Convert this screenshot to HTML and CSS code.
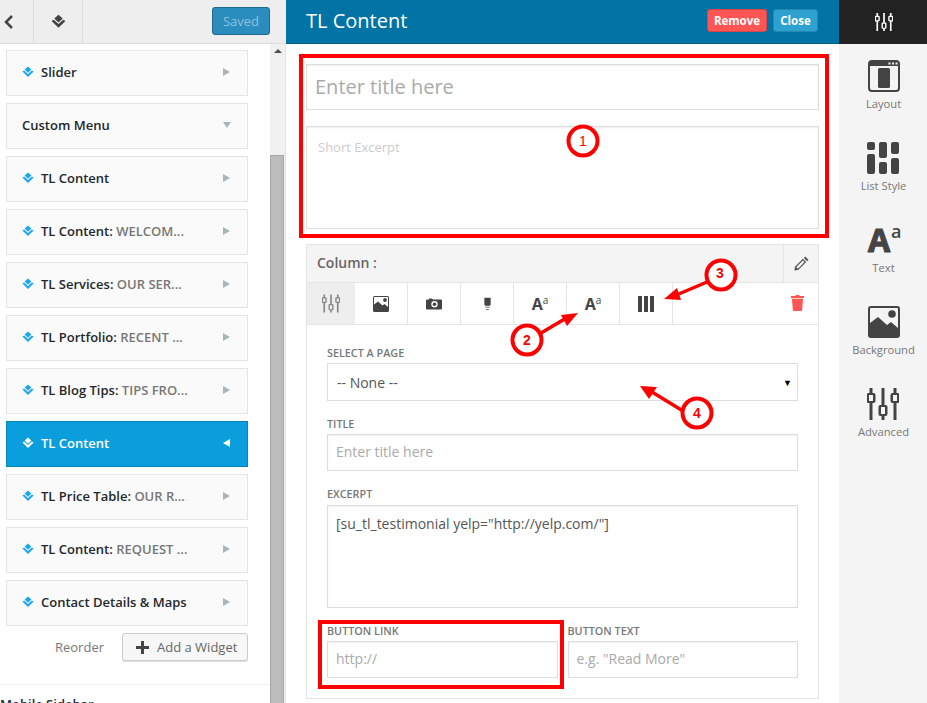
FILE: index.html
```html
<!DOCTYPE html>
<html lang="en">
<head>
    <meta charset="UTF-8">
    <title>TL Content</title>
    <link rel="stylesheet" href="styles.css">
</head>
<body>

<svg class="icon-defs" width="0" height="0">
    <symbol id="i-layers" viewBox="0 0 12 12">
        <path d="M6 .5 9.400 3.600 6 6.700 2.600 3.600z"/>
        <path d="M.4 5.600 2.200 4.500 6 8 9.800 4.500 11.600 5.600 6 11z"/>
    </symbol>
    <symbol id="i-sliders" viewBox="0 0 32 32">
        <path d="M2.500 0h3v5h1a2 2 0 0 1 2 2v6a2 2 0 0 1-2 2h-1v17h-3V15h-1a2 2 0 0 1-2-2V7a2 2 0 0 1 2-2h1zM2 7v6h4V7z" fill-rule="evenodd"/>
        <path d="M14.500 0h3v17h1a2 2 0 0 1 2 2v7a2 2 0 0 1-2 2h-1v4h-3v-4h-1a2 2 0 0 1-2-2v-7a2 2 0 0 1 2-2h1zM14 19v7h4v-7z" fill-rule="evenodd"/>
        <path d="M26.500 0h3v5h1a2 2 0 0 1 2 2v6a2 2 0 0 1-2 2h-1v17h-3V15h-1a2 2 0 0 1-2-2V7a2 2 0 0 1 2-2h1zM26 7v6h4V7z" fill-rule="evenodd"/>
    </symbol>
    <symbol id="i-image" viewBox="0 0 32 32">
        <path d="M3 0h26a3 3 0 0 1 3 3v26a3 3 0 0 1-3 3H3a3 3 0 0 1-3-3V3a3 3 0 0 1 3-3zM2 3v14l8-6 9 8 4-3 7 6V3a1 1 0 0 0-1-1H3a1 1 0 0 0-1 1z" fill-rule="evenodd"/>
        <circle cx="24" cy="8" r="3.800"/>
    </symbol>
    <symbol id="i-camera" viewBox="0 0 16 12">
        <path d="M1 1.500h2V.5h3l1 1h8a1 1 0 0 1 1 1v8a1 1 0 0 1-1 1H1a1 1 0 0 1-1-1v-8a1 1 0 0 1 1-1zM8.500 3a3.200 3.200 0 1 0 0 6.400 3.200 3.200 0 0 0 0-6.400z" fill-rule="evenodd"/>
        <circle cx="8.500" cy="6.200" r="1.800"/>
    </symbol>
    <symbol id="i-lamp" viewBox="0 0 10 14">
        <path d="M1.500 0h7v7.500l-1 1.500h-5l-1-1.500z"/>
        <path d="M2.500 10h5v1h-5zM3.500 12.500h3v1h-3z"/>
    </symbol>
    <symbol id="i-columns" viewBox="0 0 16 16">
        <path d="M0 0h4v16H0zM6 0h4v16H6zM12 0h4v16h-4z"/>
    </symbol>
    <symbol id="i-pencil" viewBox="0 0 16 16">
        <path d="M12 .5 15.500 4 14 5.500 10.500 2zM9.500 3 13 6.500 4.500 15 .5 15.500 1 11.500zM2.500 11.800l1.700 1.700 7-7L9.500 4.800z" fill-rule="evenodd"/>
    </symbol>
    <symbol id="i-trash" viewBox="0 0 14 17">
        <path d="M4.500 1 5.500 0h3l1 1H14v2H0V1zM1 4h12l-1 12a1 1 0 0 1-1 1H3a1 1 0 0 1-1-1z"/>
    </symbol>
    <symbol id="i-layout" viewBox="0 0 32 32">
        <path d="M4 0h24a4 4 0 0 1 4 4v24a4 4 0 0 1-4 4H4a4 4 0 0 1-4-4V4a4 4 0 0 1 4-4zM2 6v22a2 2 0 0 0 2 2h24a2 2 0 0 0 2-2V6z" fill-rule="evenodd"/>
        <rect x="10" y="8" width="12" height="20" rx="1.500"/>
        <path d="M20.500 2.500h2v2h-2zM24 2.500h2v2h-2zM27.500 2.500h2v2h-2z" fill="#f4f4f4"/>
    </symbol>
    <symbol id="i-list" viewBox="0 0 32 32">
        <rect x="0" y="0" width="8" height="8" rx="2"/>
        <rect x="12" y="0" width="8" height="16" rx="2"/>
        <rect x="24" y="0" width="8" height="12" rx="2"/>
        <rect x="0" y="12" width="8" height="20" rx="2"/>
        <rect x="12" y="20" width="8" height="12" rx="2"/>
        <rect x="24" y="16" width="8" height="16" rx="2"/>
    </symbol>
</svg>

<div class="app">
    <div class="left-panel">
        <div class="top-bar">
            <div class="top-cell back-cell">
                <svg class="back-icon" viewBox="0 0 10 14"><path d="M8 1 2 7l6 6" fill="none" stroke="#444" stroke-width="2.500"/></svg>
            </div>
            <div class="top-cell logo-cell">
                <svg class="logo-icon"><use href="#i-layers"/></svg>
            </div>
            <button class="saved-btn">Saved</button>
        </div>
        <div class="left-body">
            <div class="widget-list">
                <div class="widget"><svg class="layer"><use href="#i-layers"/></svg><span class="name">Slider</span><span class="arrow-right"></span></div>
                <div class="widget"><span class="name">Custom Menu</span><span class="arrow-down"></span></div>
                <div class="widget"><svg class="layer"><use href="#i-layers"/></svg><span class="name">TL Content</span><span class="arrow-right"></span></div>
                <div class="widget"><svg class="layer"><use href="#i-layers"/></svg><span class="name">TL Content: <em>WELCOM...</em></span><span class="arrow-right"></span></div>
                <div class="widget"><svg class="layer"><use href="#i-layers"/></svg><span class="name">TL Services: <em>OUR SER...</em></span><span class="arrow-right"></span></div>
                <div class="widget"><svg class="layer"><use href="#i-layers"/></svg><span class="name">TL Portfolio: <em>RECENT ...</em></span><span class="arrow-right"></span></div>
                <div class="widget"><svg class="layer"><use href="#i-layers"/></svg><span class="name">TL Blog Tips: <em>TIPS FRO...</em></span><span class="arrow-right"></span></div>
                <div class="widget active"><svg class="layer"><use href="#i-layers"/></svg><span class="name">TL Content</span><span class="arrow-left"></span></div>
                <div class="widget"><svg class="layer"><use href="#i-layers"/></svg><span class="name">TL Price Table: <em>OUR R...</em></span><span class="arrow-right"></span></div>
                <div class="widget"><svg class="layer"><use href="#i-layers"/></svg><span class="name">TL Content: <em>REQUEST ...</em></span><span class="arrow-right"></span></div>
                <div class="widget"><svg class="layer"><use href="#i-layers"/></svg><span class="name">Contact Details &amp; Maps</span><span class="arrow-right"></span></div>
                <div class="widget-actions">
                    <span class="reorder">Reorder</span>
                    <button class="add-btn"><span class="plus"></span>Add a Widget</button>
                </div>
                <div class="next-sidebar">Mobile Sidebar</div>
            </div>
            <div class="scrollbar">
                <span class="scroll-up"></span>
                <div class="scroll-thumb"></div>
            </div>
        </div>
    </div>

    <div class="editor">
        <div class="editor-head">
            <h1>TL Content</h1>
            <button class="btn-remove">Remove</button>
            <button class="btn-close">Close</button>
        </div>
        <div class="editor-body">
            <div class="big-title">Enter title here</div>
            <div class="short-excerpt">Short Excerpt</div>

            <div class="column-box">
                <div class="column-head">
                    <span>Column :</span>
                    <div class="pencil-cell"><svg class="pencil"><use href="#i-pencil"/></svg></div>
                </div>
                <div class="tabs">
                    <div class="tab first"><svg class="tab-sliders"><use href="#i-sliders"/></svg></div>
                    <div class="tab"><svg class="tab-image"><use href="#i-image"/></svg></div>
                    <div class="tab"><svg class="tab-camera"><use href="#i-camera"/></svg></div>
                    <div class="tab"><svg class="tab-lamp"><use href="#i-lamp"/></svg></div>
                    <div class="tab"><span class="aa">A<sup>a</sup></span></div>
                    <div class="tab"><span class="aa">A<sup>a</sup></span></div>
                    <div class="tab"><svg class="tab-columns"><use href="#i-columns"/></svg></div>
                    <svg class="trash"><use href="#i-trash"/></svg>
                </div>
                <div class="form">
                    <label class="first-label">SELECT A PAGE</label>
                    <div class="select-box"><span>-- None --</span><span class="select-arrow">▼</span></div>
                    <label>TITLE</label>
                    <div class="field placeholder">Enter title here</div>
                    <label class="excerpt-label">EXCERPT</label>
                    <div class="field excerpt">[su_tl_testimonial yelp="http://yelp.com/"]</div>
                    <div class="two-cols">
                        <div class="col">
                            <label>BUTTON LINK</label>
                            <div class="field placeholder">http://</div>
                        </div>
                        <div class="col">
                            <label>BUTTON TEXT</label>
                            <div class="field placeholder">e.g. "Read More"</div>
                        </div>
                    </div>
                </div>
            </div>
        </div>
    </div>

    <div class="side-tools">
        <div class="tools-head"><svg class="head-sliders"><use href="#i-sliders"/></svg></div>
        <div class="tool"><svg class="tool-icon"><use href="#i-layout"/></svg><span>Layout</span></div>
        <div class="tool"><svg class="tool-icon"><use href="#i-list"/></svg><span>List Style</span></div>
        <div class="tool">
            <svg class="tool-icon" viewBox="0 0 32 32"><text x="0" y="27.500" class="aa-big">A</text><text x="23" y="14" class="aa-small">a</text></svg>
            <span>Text</span>
        </div>
        <div class="tool"><svg class="tool-icon"><use href="#i-image"/></svg><span>Background</span></div>
        <div class="tool"><svg class="tool-icon"><use href="#i-sliders"/></svg><span>Advanced</span></div>
    </div>
</div>

<!-- red marks drawn on top of the screenshot -->
<svg class="marks" width="927" height="703" viewBox="0 0 927 703">
    <rect x="301" y="56" width="526" height="180" fill="none" stroke="#f00" stroke-width="4"/>
    <rect x="320" y="622" width="242" height="65" fill="none" stroke="#f00" stroke-width="4"/>
    <g fill="#fff" stroke="#f00" stroke-width="4">
        <circle cx="583" cy="141" r="14.500"/>
        <circle cx="527" cy="340" r="14.500"/>
        <circle cx="721" cy="275" r="14.500"/>
        <circle cx="697" cy="413" r="14.500"/>
    </g>
    <g stroke="#f00" stroke-width="3.500">
        <path d="M541 333 568 317"/>
        <path d="M707 282 674 296"/>
        <path d="M683 411 652 392"/>
    </g>
    <g fill="#f00">
        <path d="M578 313 567 326 561 315z"/>
        <path d="M664 299 677 288 681 300z"/>
        <path d="M640 386 657 387 649 399z"/>
    </g>
    <g class="mark-num" fill="#f00">
        <text x="583" y="146" class="thin">1</text>
        <text x="527" y="345">2</text>
        <text x="720" y="278">3</text>
        <text x="697" y="418">4</text>
    </g>
</svg>

</body>
</html>
```

FILE: styles.css
```css
* {
    box-sizing: border-box;
}

html, body {
    margin: 0;
    padding: 0;
    height: 703px;
    overflow: hidden;
}

body {
    position: relative;
    font-family: "Open Sans", sans-serif;
    font-size: 13px;
    background-color: #fff;
    color: #444;
}

.icon-defs {
    position: absolute;
}

.app {
    display: flex;
    width: 927px;
    height: 703px;
}

/* left column */
.left-panel {
    width: 286px;
    display: flex;
    flex-direction: column;
}

.top-bar {
    height: 44px;
    background-color: #eee;
    border-bottom: 1px solid #ddd;
    display: flex;
    align-items: stretch;
    flex-shrink: 0;
}

.top-cell {
    display: flex;
    align-items: center;
    justify-content: center;
    border-right: 1px solid #ddd;
}

.back-cell {
    width: 34px;
    justify-content: flex-start;
    padding-left: 4px;
}

.back-icon {
    width: 10px;
    height: 14px;
}

.logo-cell {
    width: 49px;
    fill: #444;
}

.logo-icon {
    width: 15px;
    height: 15px;
}

.saved-btn {
    margin: 7px 0 0 129px;
    width: 58px;
    height: 28px;
    background-color: #2b8cbe;
    border: 1px solid #20678c;
    border-radius: 3px;
    color: #8cc3de;
    font-family: "Open Sans", sans-serif;
    font-size: 13px;
    padding: 0;
}

.left-body {
    display: flex;
    flex: 1;
    min-height: 0;
}

.widget-list {
    width: 270px;
    padding: 6px 22px 0 6px;
    overflow: hidden;
}

.widget {
    display: flex;
    align-items: center;
    height: 46px;
    margin-bottom: 7px;
    padding: 0 17px 2px 15px;
    background-color: #fafafa;
    border: 1px solid #e5e5e5;
    font-weight: 600;
    color: #23282d;
}

.widget em {
    font-style: normal;
    color: #777;
}

.widget.active {
    background-color: #0a9fdc;
    border-color: #0784b8;
    color: #fff;
}

.layer {
    width: 12px;
    height: 12px;
    margin-right: 7px;
    fill: #1da7ee;
}

.active .layer {
    fill: #fff;
}

.name {
    flex: 1;
    white-space: nowrap;
}

.arrow-right {
    border-left: 7px solid #a9b4bb;
    border-top: 4px solid transparent;
    border-bottom: 4px solid transparent;
}

.arrow-left {
    border-right: 7px solid #fff;
    border-top: 4px solid transparent;
    border-bottom: 4px solid transparent;
}

.arrow-down {
    border-top: 6px solid #a9b4bb;
    border-left: 4.500px solid transparent;
    border-right: 4.500px solid transparent;
    margin-right: -1px;
}

.widget-actions {
    display: flex;
    align-items: center;
    justify-content: flex-end;
}

.reorder {
    color: #777;
    margin-right: 18px;
}

.add-btn {
    display: flex;
    align-items: center;
    width: 126px;
    height: 28px;
    padding: 0 0 0 13px;
    background-color: #f7f7f7;
    border: 1px solid #ccc;
    border-radius: 3px;
    box-shadow: 0 1px 0 #ddd;
    color: #666;
    font-family: "Open Sans", sans-serif;
    font-size: 13px;
}

.plus {
    position: relative;
    width: 13px;
    height: 3px;
    margin-right: 8px;
    background-color: #444;
}

.plus::after {
    content: "";
    position: absolute;
    left: 5px;
    top: -5px;
    width: 3px;
    height: 13px;
    background-color: #444;
}

.next-sidebar {
    margin: 23px 0 0 -6px;
    padding-top: 10px;
    width: 270px;
    border-top: 1px solid #eee;
    font-weight: 600;
    color: #23282d;
    white-space: nowrap;
}

.scrollbar {
    position: relative;
    width: 16px;
    background-color: #f1f1f1;
    border-right: 1px solid #e3e3e3;
}

.scroll-up {
    display: block;
    width: 0;
    margin: 5px auto 0;
    border-left: 4px solid transparent;
    border-right: 4px solid transparent;
    border-bottom: 4px solid #505050;
}

.scroll-thumb {
    margin-top: 102px;
    height: 560px;
    width: 14px;
    background-color: #bcbcbc;
    border: 1px solid #a8a8a8;
}

/* middle column */
.editor {
    width: 553px;
    display: flex;
    flex-direction: column;
}

.editor-head {
    height: 44px;
    background-color: #0273a5;
    border-bottom: 1px solid #035d85;
    display: flex;
    align-items: center;
    padding: 0 21px 2px 20px;
    flex-shrink: 0;
}

.editor-head h1 {
    flex: 1;
    margin: 0;
    font-size: 20px;
    font-weight: 400;
    color: #fff;
}

.btn-remove, .btn-close {
    height: 23px;
    padding: 0;
    border-radius: 3px;
    color: #fff;
    font-family: "Open Sans", sans-serif;
    font-size: 11.500px;
    font-weight: 700;
}

.btn-remove {
    width: 60px;
    background-color: #ff5555;
    border: 1px solid #d94444;
    margin-right: 6px;
}

.btn-close {
    width: 45px;
    background-color: #2da1cf;
    border: 1px solid #2488b0;
}

.editor-body {
    padding: 20px 20px 0;
}

.big-title {
    height: 46px;
    padding: 0 8px;
    border: 1px solid #ddd;
    box-shadow: inset 0 1px 2px rgba(0, 0, 0, 0.07);
    font-size: 20px;
    line-height: 44px;
    color: #aaa;
}

.short-excerpt {
    height: 103px;
    margin-top: 16px;
    padding: 11px 11px;
    border: 1px solid #ddd;
    box-shadow: inset 0 1px 2px rgba(0, 0, 0, 0.07);
    font-size: 13px;
    color: #ccc;
}

.column-box {
    margin-top: 15px;
    height: 455px;
    border: 1px solid #e5e5e5;
}

.column-head {
    height: 38px;
    background-color: #f4f4f4;
    border-bottom: 1px solid #e5e5e5;
    display: flex;
    align-items: center;
    justify-content: space-between;
    padding-left: 10px;
    font-size: 14px;
    font-weight: 600;
    color: #666;
}

.column-head > span {
    margin-top: -2px;
}

.pencil-cell {
    width: 35px;
    height: 37px;
    border-left: 1px solid #e5e5e5;
    display: flex;
    align-items: center;
    justify-content: center;
}

.pencil {
    width: 15px;
    height: 15px;
    fill: #555;
}

.tabs {
    height: 42px;
    border-bottom: 1px solid #e5e5e5;
    display: flex;
    align-items: stretch;
}

.tab {
    width: 53px;
    border-right: 1px solid #e5e5e5;
    display: flex;
    align-items: center;
    justify-content: center;
    fill: #444;
}

.tab.first {
    width: 48px;
    background-color: #eee;
    border-right: 0;
    fill: #888;
}

.tab-sliders {
    width: 18px;
    height: 19px;
}

.tab-image {
    width: 16px;
    height: 16px;
}

.tab-camera {
    width: 16px;
    height: 12px;
}

.tab-lamp {
    width: 9px;
    height: 14px;
}

.tab-columns {
    width: 16px;
    height: 16px;
}

.aa {
    font-size: 16px;
    font-weight: 700;
    color: #444;
    line-height: 1;
}

.aa sup {
    font-size: 10px;
    font-weight: 400;
    vertical-align: 6px;
    line-height: 0;
}

.trash {
    width: 13px;
    height: 16px;
    margin: 12px 14px 0 auto;
    fill: #ff5555;
}

.form {
    padding: 21px 20px 0;
}

label {
    display: block;
    margin-top: 16px;
    margin-bottom: 3px;
    height: 14px;
    font-size: 10.800px;
    font-weight: 600;
    line-height: 14px;
    color: #777;
}

label.first-label {
    margin-top: 0;
}

label.excerpt-label {
    margin-bottom: 4px;
}

.select-box {
    display: flex;
    justify-content: space-between;
    align-items: center;
    height: 38px;
    padding: 0 5px 0 9px;
    border: 1px solid #ddd;
    font-size: 14px;
    color: #555;
}

.select-arrow {
    font-size: 9px;
    color: #000;
}

.field {
    height: 37px;
    padding: 0 8px;
    border: 1px solid #ddd;
    box-shadow: inset 0 1px 2px rgba(0, 0, 0, 0.07);
    font-size: 14px;
    line-height: 34px;
}

.placeholder {
    color: #aaa;
}

.excerpt {
    height: 103px;
    padding-top: 8px;
    line-height: 20px;
    color: #555;
}

.two-cols {
    display: flex;
    gap: 10px;
}

.col {
    flex: 1;
}

/* right column */
.side-tools {
    width: 88px;
    padding-left: 1px;
    background-color: #f4f4f4;
    display: flex;
    flex-direction: column;
    align-items: center;
}

.tools-head {
    align-self: flex-start;
    width: 88px;
    height: 44px;
    margin-left: -1px;
    padding-left: 2px;
    background-color: #222;
    display: flex;
    align-items: center;
    justify-content: center;
    fill: #fff;
}

.head-sliders {
    width: 18px;
    height: 18px;
}

.tool {
    height: 82px;
    padding-top: 16px;
    display: flex;
    flex-direction: column;
    align-items: center;
    font-size: 11.200px;
    color: #777;
    fill: #444;
}

.tool-icon {
    width: 32px;
    height: 32px;
    margin-bottom: 4px;
    overflow: visible;
}

.aa-big {
    font-family: "Open Sans", sans-serif;
    font-size: 32px;
    font-weight: 700;
    stroke: #444;
    stroke-width: 1.200px;
    stroke-linejoin: round;
}

.aa-small {
    font-family: "Open Sans", sans-serif;
    font-size: 18px;
    font-weight: 600;
}

/* numbered arrows over the page */
.marks {
    position: absolute;
    left: 0;
    top: 0;
}

.mark-num text {
    font-family: "Liberation Sans", sans-serif;
    font-size: 14px;
    font-weight: 700;
    text-anchor: middle;
}

.mark-num text.thin {
    font-weight: 400;
}
```
